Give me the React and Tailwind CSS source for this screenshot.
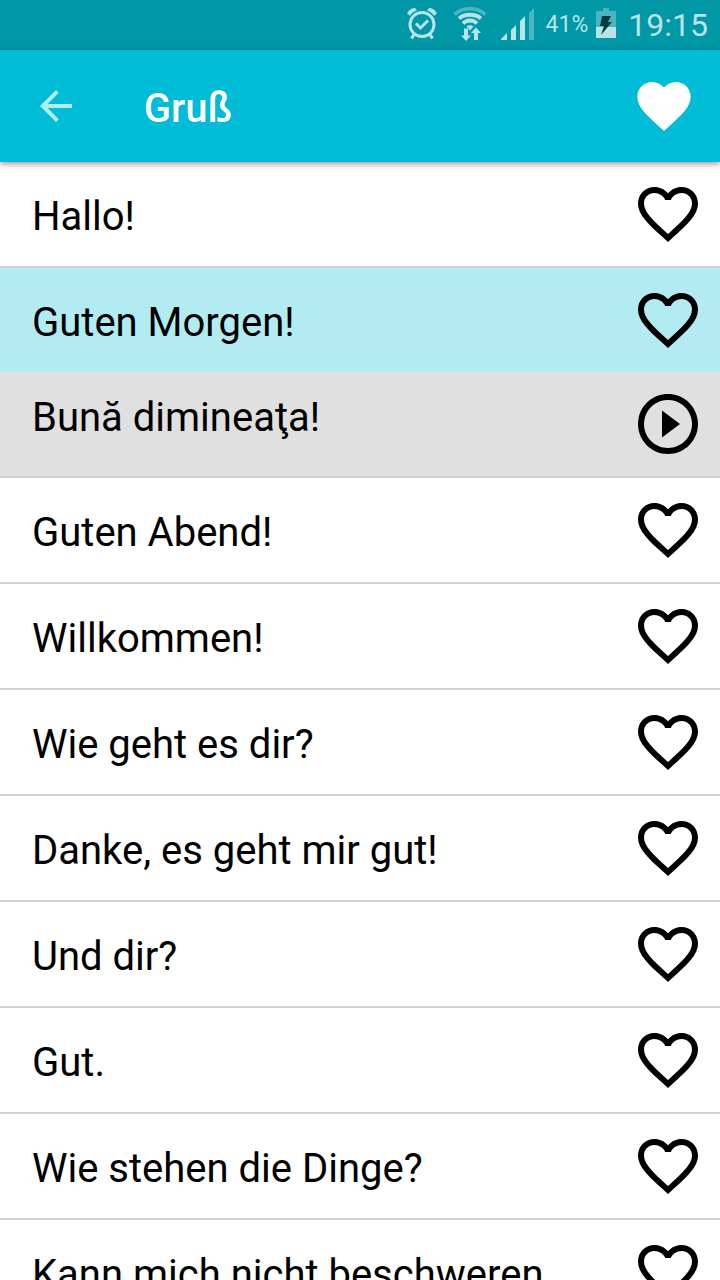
import React, { useState } from 'react'

const HEART = "M12 21.35l-1.45-1.32C5.4 15.36 2 12.28 2 8.5 2 5.42 4.42 3 7.5 3c1.74 0 3.41.81 4.5 2.09C13.09 3.81 14.76 3 16.5 3 19.58 3 22 5.42 22 8.5c0 3.78-3.4 6.86-8.55 11.54L12 21.35z"
const HEART_OUTLINE = "M16.5 3c-1.74 0-3.41.81-4.5 2.09C10.91 3.81 9.24 3 7.5 3 4.42 3 2 5.42 2 8.5c0 3.78 3.4 6.86 8.55 11.54L12 21.35l1.45-1.32C18.6 15.36 22 12.28 22 8.5 22 5.42 19.58 3 16.5 3zm-4.4 15.55l-.1.1-.1-.1C7.14 14.24 4 11.39 4 8.5 4 6.5 5.5 5 7.5 5c1.54 0 3.04.99 3.57 2.36h1.87C13.46 5.99 14.96 5 16.5 5c2 0 3.5 1.5 3.5 3.5 0 2.89-3.14 5.74-7.9 10.05z"
const PLAY = "M10 16.5l6-4.5-6-4.5v9zM12 2C6.48 2 2 6.48 2 12s4.48 10 10 10 10-4.48 10-10S17.52 2 12 2zm0 18c-4.41 0-8-3.59-8-8s3.59-8 8-8 8 3.59 8 8-3.59 8-8 8z"
const ARROW = "M20 11H7.83l5.59-5.59L12 4l-8 8 8 8 1.41-1.41L7.83 13H20v-2z"

const phrases = [
    { id: 1, text: "Hallo!" },
    { id: 2, text: "Guten Morgen!", translation: "Bună dimineaţa!" },
    { id: 3, text: "Guten Abend!" },
    { id: 4, text: "Willkommen!" },
    { id: 5, text: "Wie geht es dir?" },
    { id: 6, text: "Danke, es geht mir gut!" },
    { id: 7, text: "Und dir?" },
    { id: 8, text: "Gut." },
    { id: 9, text: "Wie stehen die Dinge?" },
    { id: 10, text: "Kann mich nicht beschweren" }
]

const Icon = ({ path, className }) => (
    <svg viewBox="0 0 24 24" fill="currentColor" className={className} aria-hidden="true">
        <path d={path} />
    </svg>
)

const AlarmIcon = () => (
    <svg viewBox="0 0 30 32" className="h-8 w-[30px]" fill="none" stroke="currentColor" aria-hidden="true">
        <circle cx="15" cy="16.5" r="12" strokeWidth="3" />
        <path d="M9 15.5l4.5 4.5 7.5-7.5" strokeWidth="3" />
        <path d="M.5 5.5C1.5 2.5 4.5.3 8 .3l1.5 2.2C6.5 3.5 4.5 5 3 7.5zM29.5 5.5C28.5 2.5 25.5.3 22 .3l-1.5 2.2C23.5 3.5 25.5 5 27 7.5z" fill="currentColor" strokeWidth="0.6" />
        <path d="M7 26.5l-2.5 4M23 26.5l2.5 4" strokeWidth="3.2" />
    </svg>
)

const WifiIcon = () => (
    <svg viewBox="0 0 34 34" className="h-[34px] w-[34px]" fill="none" stroke="currentColor" aria-hidden="true">
        <path d="M1.5 7.5C10-.2 24-.2 32.5 7.5" strokeWidth="3.6" opacity="0.4" />
        <path d="M6 11.5C12 6.5 22 6.5 28 11.5M10 16.5C14 12.5 20 12.5 24 16.5" strokeWidth="3.8" />
        <path d="M13.5 19.5C15.5 17.7 18.5 17.7 20.5 19.5L17 23.5z" fill="currentColor" stroke="none" />
        <path d="M11 21.5h4v7h3l-5 5.500-5-5.500h3zM21 33v-7h-3l5-5.500 5 5.500h-3v7z" fill="currentColor" stroke="none" />
    </svg>
)

const SignalIcon = () => (
    <svg viewBox="0 0 33 32" className="h-8 w-[33px]" fill="currentColor" aria-hidden="true">
        <path d="M0 32v-1l6-6v7zM10 32V22l5-5v15zM19 32V13l5-5v24z" />
        <path d="M28 32V5l5-5v32z" opacity="0.4" />
    </svg>
)

const BatteryIcon = () => (
    <svg viewBox="0 0 20 30" className="h-[30px] w-5" fill="currentColor" aria-hidden="true">
        <path d="M7 0h6v3h7v16H0V3h7z" opacity="0.4" />
        <path d="M0 19h20v11H0z" />
        <path d="M6 8h9l-3 6h4L5 27l3-9H4z" fill="#093a42" />
    </svg>
)

const StatusBar = () => (
    <div className="flex h-[50px] shrink-0 items-center justify-end bg-[#0097a7] pr-3 text-[#b8e3e8]">
        <div className="mr-3 flex items-center pb-0.5">
            <AlarmIcon />
            <div className="mr-3.5 ml-4"><WifiIcon /></div>
            <SignalIcon />
        </div>
        <span className="text-[23px]">41%</span>
        <div className="mr-3 ml-2 pb-1"><BatteryIcon /></div>
        <span className="text-[32px]">19:15</span>
    </div>
)

const PhraseRow = ({ phrase, open, favorite, onToggle, onFavorite }) => (
    <li className={`border-b-2 border-[#d0d0d0] ${open ? "bg-[#b2ebf2]" : "bg-white"}`}>
        <div className="flex h-[104px] items-center pr-4 pl-8">
            <button type="button" onClick={onToggle} className="flex-1 pt-1.5 text-left whitespace-nowrap">{phrase.text}</button>
            <button type="button" onClick={onFavorite} aria-label={`Favorit: ${phrase.text}`}>
                <Icon path={favorite ? HEART : HEART_OUTLINE} className="size-[72px]" />
            </button>
        </div>
        {open && phrase.translation ? (
            <div className="flex h-[104px] items-center bg-[#e0e0e0] pr-4 pl-8">
                <span lang="ro" className="flex-1 pb-3">{phrase.translation}</span>
                <button type="button" aria-label="Abspielen">
                    <Icon path={PLAY} className="size-[72px]" />
                </button>
            </div>
        ) : null}
    </li>
)

const App = () => {
    const [openId, setOpenId] = useState(2)
    const [favorites, setFavorites] = useState([])

    const toggleFavorite = (id) => {
        setFavorites(favorites.includes(id) ? favorites.filter((f) => f !== id) : [...favorites, id])
    }

    return (
        <div className="flex h-screen flex-col bg-white font-['Roboto',sans-serif] text-black">
            <StatusBar />
            <header className="relative z-10 flex h-28 shrink-0 items-center bg-[#00bcd7] pr-6 pl-8 text-white shadow-[0_2px_6px_rgba(0,0,0,0.4)]">
                <button type="button" aria-label="Zurück" className="text-[#b2ebf2]">
                    <Icon path={ARROW} className="size-12" />
                </button>
                <h1 className="ml-16 flex-1 pt-1.5 text-[40px] font-medium">Gruß</h1>
                <button type="button" aria-label="Favoriten">
                    <Icon path={HEART} className="size-16" />
                </button>
            </header>
            <ul className="flex-1 overflow-y-auto text-[40px] leading-12 [scrollbar-width:none]">
                {phrases.map((phrase) => (
                    <PhraseRow
                        key={phrase.id}
                        phrase={phrase}
                        open={openId === phrase.id}
                        favorite={favorites.includes(phrase.id)}
                        onToggle={() => setOpenId(openId === phrase.id ? null : phrase.id)}
                        onFavorite={() => toggleFavorite(phrase.id)} />
                ))}
            </ul>
        </div>
    )
}

export default App
